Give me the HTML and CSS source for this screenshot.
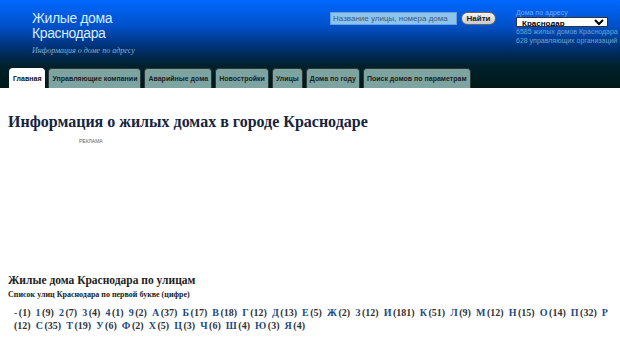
FILE: index.html
```html
<!DOCTYPE html>
<html lang="ru">
<head>
<meta charset="utf-8">
<link rel="stylesheet" href="styles.css">
</head>
<body>
<header class="header">
  <div class="top">
    <div class="brand">
      <div class="logo">Жилые дома<br>Краснодара</div>
      <div class="slogan">Информация о доме по адресу</div>
    </div>
    <form class="search">
      <input class="search-input" type="text" placeholder="Название улицы, номера дома">
      <button class="search-btn" type="button">Найти</button>
    </form>
    <div class="city">
      <div class="city-label">Дома по адресу</div>
      <select class="city-select"><option>Краснодар</option></select>
      <div class="city-info">6585 жилых домов Краснодара</div>
      <div class="city-info">628 управляющих организаций</div>
    </div>
  </div>
  <nav class="tabs">
    <a class="tab active">Главная</a>
    <a class="tab">Управляющие компании</a>
    <a class="tab">Аварийные дома</a>
    <a class="tab">Новостройки</a>
    <a class="tab">Улицы</a>
    <a class="tab">Дома по году</a>
    <a class="tab">Поиск домов по параметрам</a>
  </nav>
</header>
<main class="main">
  <h1 class="title">Информация о жилых домах в городе Краснодаре</h1>
  <div class="ad"><span class="ad-label">реклама</span></div>
  <h2 class="sub">Жилые дома Краснодара по улицам</h2>
  <h3 class="subsub">Список улиц Краснодара по первой букве (цифре)</h3>
  <div class="letters">
    <span class="it"><a>-</a> (1)</span>
    <span class="it"><a>1</a> (9)</span>
    <span class="it"><a>2</a> (7)</span>
    <span class="it"><a>3</a> (4)</span>
    <span class="it"><a>4</a> (1)</span>
    <span class="it"><a>9</a> (2)</span>
    <span class="it"><a>А</a> (37)</span>
    <span class="it"><a>Б</a> (17)</span>
    <span class="it"><a>В</a> (18)</span>
    <span class="it"><a>Г</a> (12)</span>
    <span class="it"><a>Д</a> (13)</span>
    <span class="it"><a>Е</a> (5)</span>
    <span class="it"><a>Ж</a> (2)</span>
    <span class="it"><a>З</a> (12)</span>
    <span class="it"><a>И</a> (181)</span>
    <span class="it"><a>К</a> (51)</span>
    <span class="it"><a>Л</a> (9)</span>
    <span class="it"><a>М</a> (12)</span>
    <span class="it"><a>Н</a> (15)</span>
    <span class="it"><a>О</a> (14)</span>
    <span class="it"><a>П</a> (32)</span>
    <span class="it"><a>Р</a> (12)</span>
    <span class="it"><a>С</a> (35)</span>
    <span class="it"><a>Т</a> (19)</span>
    <span class="it"><a>У</a> (6)</span>
    <span class="it"><a>Ф</a> (2)</span>
    <span class="it"><a>Х</a> (5)</span>
    <span class="it"><a>Ц</a> (3)</span>
    <span class="it"><a>Ч</a> (6)</span>
    <span class="it"><a>Ш</a> (4)</span>
    <span class="it"><a>Ю</a> (3)</span>
    <span class="it"><a>Я</a> (4)</span>
  </div>
</main>
</body>
</html>
```

FILE: styles.css
```css
* { box-sizing: border-box; }
body {
  margin: 0;
  background: #fff;
  font-family: "Liberation Serif", serif;
  color: #222;
}
.header {
  height: 88px;
  background: linear-gradient(to bottom, #0068ff 0%, #0050c8 30%, #003070 55%, #00202c 75%, #001a18 100%);
  display: flex;
  flex-direction: column;
  justify-content: space-between;
}
.top {
  display: flex;
  padding: 10px 0 0 32px;
}
.brand { width: 298px; }
.logo {
  font-family: "Liberation Sans", Arial, sans-serif;
  font-size: 14px;
  line-height: 15px;
  letter-spacing: -0.4px;
  color: #d8ecff;
  padding-top: 1px;
}
.slogan {
  margin-top: 5px;
  font-family: "Liberation Serif", serif;
  font-style: italic;
  font-size: 8px;
  color: #8fb0c8;
}
.search {
  display: flex;
  align-items: flex-start;
  gap: 4px;
  margin: 2px 0 0 0;
  width: 186px;
}
.search-input {
  width: 127px;
  height: 13px;
  padding: 0 2px;
  border: 1px solid #6aa0d8;
  background: #8cc4f0;
  font-family: "Liberation Sans", Arial, sans-serif;
  font-size: 8px;
  color: #456;
}
.search-input::placeholder { color: #3e5a78; }
.search-btn {
  width: 35px;
  height: 13px;
  padding: 0;
  border: 1px solid #666;
  border-radius: 7px;
  background: linear-gradient(#f4f4f4, #c8c8c8);
  font-family: "Liberation Sans", Arial, sans-serif;
  font-weight: bold;
  font-size: 8px;
  color: #222;
}
.city {
  font-family: "Liberation Sans", Arial, sans-serif;
  font-size: 7px;
  line-height: 9px;
}
.city-label { color: #6ab0ff; margin-top: -2px; }
.city-select {
  display: block;
  width: 92px;
  height: 10px;
  padding: 0 0 0 1px;
  margin: 0;
  border: 1px solid #333;
  border-radius: 0;
  background: #fff;
  font-family: "Liberation Sans", Arial, sans-serif;
  font-weight: bold;
  font-size: 8px;
  line-height: 8px;
  color: #000;
}
.city-info { color: #6aa4c8; }
.tabs {
  display: flex;
  gap: 3px;
  padding-left: 9px;
  align-items: flex-end;
}
.tab {
  height: 20px;
  padding: 0 3px;
  display: flex;
  align-items: center;
  background: #7ea4a2;
  border: 1px solid #2a3a3a;
  border-bottom: none;
  border-radius: 4px 4px 0 0;
  font-family: "Liberation Sans", Arial, sans-serif;
  font-size: 7px;
  font-weight: bold;
  color: #1a2222;
  white-space: nowrap;
}
.tab.active {
  background: #fff;
  border-color: #fff;
  color: #111;
}
.main { padding: 0 8px; }
.title {
  margin: 22px 0 0 0;
  font-size: 16px;
  line-height: 24px;
  font-weight: bold;
  color: #16243c;
}
.ad {
  height: 138px;
  padding: 4px 0 0 71px;
}
.ad-label {
  display: block;
  font-family: "Liberation Sans", Arial, sans-serif;
  font-size: 5px;
  line-height: 6px;
  text-transform: uppercase;
  color: #666;
}
.sub {
  margin: 0;
  font-size: 11.5px;
  line-height: 16px;
  font-weight: bold;
  color: #222;
}
.subsub {
  margin: 1px 0 0 0;
  font-size: 8px;
  line-height: 12px;
  font-weight: bold;
  color: #222;
}
.letters {
  margin-top: 5px;
  padding-left: 6px;
  font-size: 10px;
  line-height: 13px;
  font-weight: bold;
  color: #333;
  word-spacing: -1px;
}
.letters .it { margin-right: 3.6px; }
.letters a { color: #1a4c86; }
```
